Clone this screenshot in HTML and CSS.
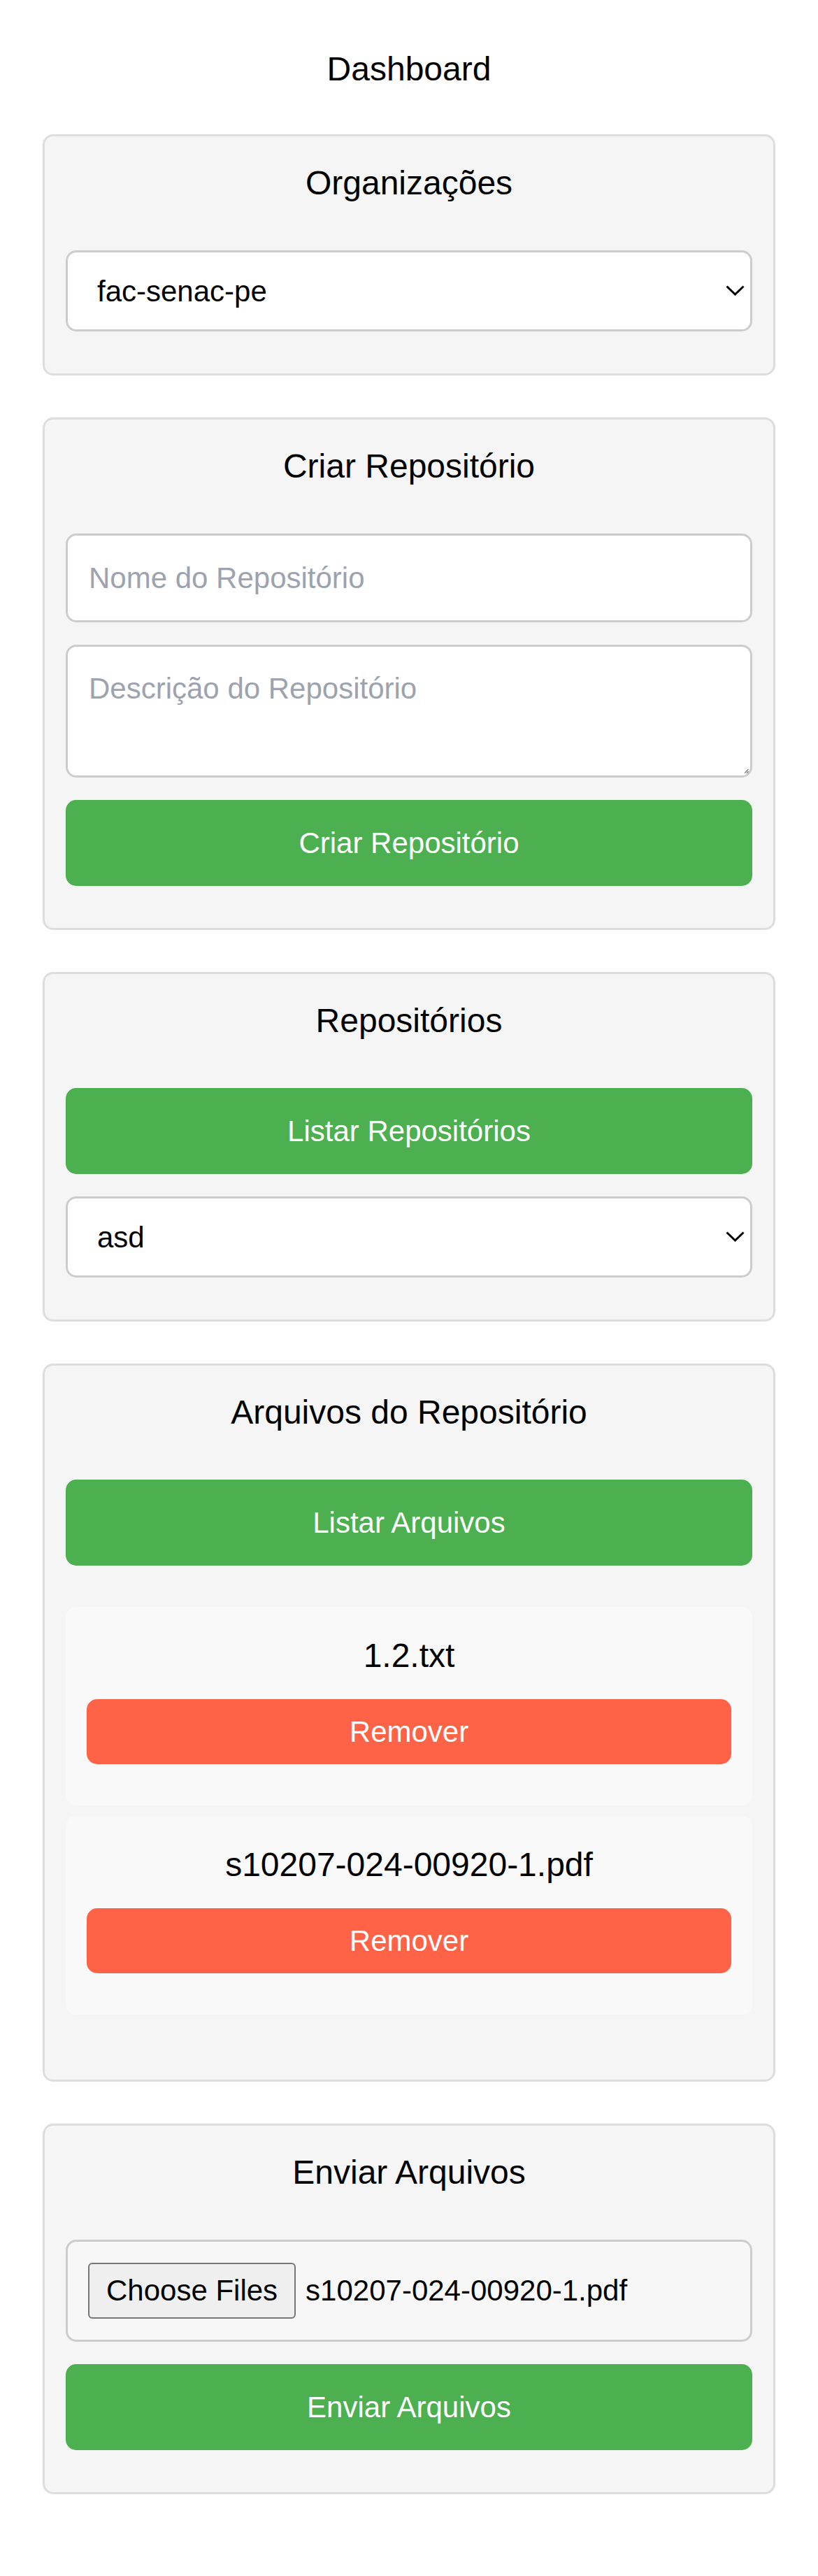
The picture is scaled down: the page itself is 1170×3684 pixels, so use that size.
FILE: index.html
```html
<!DOCTYPE html>
<html lang="pt-BR">
<head>
<meta charset="utf-8">
<title>Dashboard</title>
<link rel="stylesheet" href="styles.css">
</head>
<body>
<main class="page">
  <h1 class="page-title">Dashboard</h1>

  <section class="card">
    <h2 class="card-title">Organizações</h2>
    <div class="select-wrap">
      <select class="field select"><option>fac-senac-pe</option></select>
      <svg class="chevron" width="27" height="15" viewBox="0 0 27 15"><path d="M1.5 1.5 L13.5 13 L25.5 1.5" fill="none" stroke="#000" stroke-width="3"/></svg>
    </div>
  </section>

  <section class="card">
    <h2 class="card-title">Criar Repositório</h2>
    <input class="field input" type="text" placeholder="Nome do Repositório">
    <div class="textarea-wrap">
      <textarea class="field textarea" placeholder="Descrição do Repositório"></textarea>
      <svg class="grip" width="6" height="6" viewBox="0 0 6 6"><path d="M0 5.5 L5.5 0 M3 5.5 L5.5 3" stroke="#777" stroke-width="1.2"/></svg>
    </div>
    <button class="btn btn-green" type="button">Criar Repositório</button>
  </section>

  <section class="card">
    <h2 class="card-title">Repositórios</h2>
    <button class="btn btn-green" type="button">Listar Repositórios</button>
    <div class="select-wrap">
      <select class="field select"><option>asd</option></select>
      <svg class="chevron" width="27" height="15" viewBox="0 0 27 15"><path d="M1.5 1.5 L13.5 13 L25.5 1.5" fill="none" stroke="#000" stroke-width="3"/></svg>
    </div>
  </section>

  <section class="card">
    <h2 class="card-title">Arquivos do Repositório</h2>
    <button class="btn btn-green" type="button">Listar Arquivos</button>
    <ul class="file-list">
      <li class="file-item">
        <span class="file-name">1.2.txt</span>
        <button class="btn btn-red" type="button">Remover</button>
      </li>
      <li class="file-item">
        <span class="file-name">s10207-024-00920-1.pdf</span>
        <button class="btn btn-red" type="button">Remover</button>
      </li>
    </ul>
  </section>

  <section class="card">
    <h2 class="card-title">Enviar Arquivos</h2>
    <div class="file-box">
      <span class="file-btn">Choose Files</span>
      <span class="file-chosen">s10207-024-00920-1.pdf</span>
    </div>
    <button class="btn btn-green" type="button">Enviar Arquivos</button>
  </section>
</main>
</body>
</html>
```

FILE: styles.css
```css
* {
  box-sizing: border-box;
}

html, body {
  margin: 0;
  padding: 0;
  background: #ffffff;
}

body {
  font-family: "Liberation Sans", Arial, sans-serif;
  color: #000;
}

.page {
  padding: 71px 61px 58px;
  display: flex;
  flex-direction: column;
}

.page-title {
  margin: 0 0 66px;
  font-size: 48px;
  line-height: 55px;
  font-weight: normal;
  text-align: center;
}

.card {
  display: flex;
  flex-direction: column;
  gap: 32px;
  background: #f5f5f5;
  border: 3px solid #dddddd;
  border-radius: 15px;
  padding: 39px 30px 60px;
  margin-bottom: 60px;
}

.card-title {
  margin: 0 0 37px;
  font-size: 48px;
  line-height: 55px;
  font-weight: normal;
  text-align: center;
}

.field {
  display: block;
  width: 100%;
  font-family: "Liberation Sans", Arial, sans-serif;
  font-size: 42px;
  color: #000;
  background: #ffffff;
  border: 3px solid #cccccc;
  border-radius: 15px;
  outline: none;
  margin: 0;
}

.field::placeholder {
  color: #9ca3af;
  opacity: 1;
}

.input {
  height: 127px;
  padding: 0 30px;
}

.textarea-wrap {
  position: relative;
}

.textarea {
  height: 190px;
  padding: 36px 30px;
  resize: none;
  line-height: normal;
}

.grip {
  position: absolute;
  right: 5px;
  bottom: 6px;
}

.select-wrap {
  position: relative;
}

.select {
  appearance: none;
  -webkit-appearance: none;
  height: 116px;
  padding: 0 60px 0 42px;
}

.chevron {
  position: absolute;
  right: 11px;
  top: 50%;
  margin-top: -8px;
  pointer-events: none;
}

.btn {
  display: flex;
  align-items: center;
  justify-content: center;
  width: 100%;
  border: none;
  margin: 0;
  padding: 0;
  font-family: "Liberation Sans", Arial, sans-serif;
  font-size: 42px;
  color: #ffffff;
  border-radius: 15px;
  cursor: pointer;
}

.btn-green {
  height: 123px;
  background: #4caf50;
}

.btn-red {
  height: 93px;
  background: #ff6347;
}

.file-list {
  list-style: none;
  margin: 27px 0 33px;
  padding: 0;
  display: flex;
  flex-direction: column;
  gap: 15px;
}

.file-item {
  display: flex;
  flex-direction: column;
  align-items: center;
  background: #f9f9f9;
  border-radius: 15px;
  padding: 30px 30px 29px;
}

.file-name {
  display: block;
  font-size: 48px;
  line-height: 55px;
  margin: 12px 0 35px;
}

.file-item .btn-red {
  margin-bottom: 30px;
}

.file-box {
  display: flex;
  align-items: center;
  gap: 14px;
  height: 146px;
  padding: 0 29px;
  background: #f7f7f7;
  border: 3px solid #cccccc;
  border-radius: 15px;
  font-size: 42px;
}

.file-btn {
  display: flex;
  align-items: center;
  height: 80px;
  padding: 0 24px;
  background: #efefef;
  border: 2px solid #767676;
  border-radius: 6px;
  color: #000;
}

.file-chosen {
  color: #000;
}
```
